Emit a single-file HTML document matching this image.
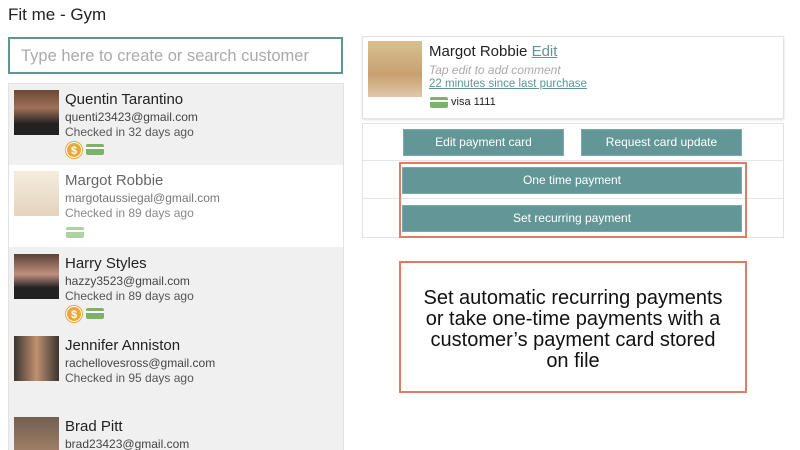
<!DOCTYPE html>
<html style="overflow:hidden;width:800px;height:450px"><head><style>
*{margin:0;padding:0;box-sizing:border-box}
body{width:800px;height:450px;overflow:hidden;background:#fff;font-family:"Liberation Sans",sans-serif;color:#222;position:relative}
.a{position:absolute}
.row{position:absolute;left:9px;width:334px;height:80px;overflow:hidden}
.ph{position:absolute;left:5px;top:6px;width:45px;height:45px}
.nm{position:absolute;left:56px;top:7px;font-size:15px}
.em{position:absolute;left:56px;top:26px;font-size:12px;color:#444}
.ck{position:absolute;left:56px;top:41px;font-size:12px;color:#555}
.card{display:inline-block;width:18px;height:11px;background:#7cb36a;border-radius:2px;position:relative}
.card:after{content:"";position:absolute;left:0;right:0;top:3px;height:2px;background:#fff}
.coin{display:inline-block;width:16px;height:16px;border-radius:50%;background:#e8a93a;color:#fff;font-size:11px;text-align:center;line-height:16px;font-weight:bold;vertical-align:middle;border:1px solid #fff;box-shadow:0 0 0 1px #e8a93a}
.btn{position:absolute;background:#639797;color:#fff;font-size:12px;text-align:center;line-height:25px;border:1px solid #7aa9a9}
.ln{position:absolute;background:#e6e6e6;height:1px}
</style></head><body>
<div class="a" style="left:8px;top:5px;font-size:17px;color:#222">Fit me - Gym</div>
<div class="a" style="left:8px;top:37px;width:335px;height:37px;border:2px solid #5e9595;font-size:16.5px;color:#aaa;padding:8px 0 0 11px">Type here to create or search customer</div>
<div class="a" style="left:8px;top:83px;width:336px;height:367px;background:#f0f0f0;border:1px solid #e2e2e2"></div>

<div class="row" style="top:84px;background:#f0f0f0">
<div class="ph" style="background:linear-gradient(#6a4a35 0,#a0705a 40%,#222 75%)"></div>
<div class="nm">Quentin Tarantino</div><div class="em">quenti23423@gmail.com</div><div class="ck">Checked in 32 days ago</div>
<div class="a" style="left:57px;top:57px"><span class="coin">$</span> <span class="card" style="vertical-align:middle"></span></div></div>

<div class="row" style="top:165px;background:#fff;height:82px">
<div class="ph" style="background:linear-gradient(#efe5d0,#d9c0a0);opacity:.7"></div>
<div class="nm" style="color:#666">Margot Robbie</div><div class="em" style="color:#777">margotaussiegal@gmail.com</div><div class="ck" style="color:#888">Checked in 89 days ago</div>
<div class="a" style="left:57px;top:60px"><span class="card" style="opacity:.6"></span></div></div>

<div class="row" style="top:248px;background:#f0f0f0">
<div class="ph" style="background:linear-gradient(#5a4035,#c09080 45%,#222 75%)"></div>
<div class="nm">Harry Styles</div><div class="em">hazzy3523@gmail.com</div><div class="ck">Checked in 89 days ago</div>
<div class="a" style="left:57px;top:57px"><span class="coin">$</span> <span class="card" style="vertical-align:middle"></span></div></div>

<div class="row" style="top:330px;background:#f0f0f0">
<div class="ph" style="background:linear-gradient(90deg,#3a3530,#c09070 50%,#3a3530)"></div>
<div class="nm">Jennifer Anniston</div><div class="em">rachellovesross@gmail.com</div><div class="ck">Checked in 95 days ago</div></div>

<div class="row" style="top:411px;background:#f0f0f0;height:39px">
<div class="ph" style="background:linear-gradient(#706050,#b08870)"></div>
<div class="nm">Brad Pitt</div><div class="em">brad23423@gmail.com</div></div>

<div class="a" style="left:362px;top:36px;width:422px;height:83px;border:1px solid #e2e2e2;box-shadow:0 1px 2px #ddd"></div>
<div class="a" style="left:368px;top:41px;width:54px;height:56px;background:linear-gradient(#d8c090,#c8a070 60%,#e0c8a8)"></div>
<div class="a" style="left:429px;top:43px;font-size:15px">Margot Robbie <span style="color:#5e9595;text-decoration:underline">Edit</span></div>
<div class="a" style="left:429px;top:63px;font-size:12px;color:#aaa;font-style:italic">Tap edit to add comment</div>
<div class="a" style="left:429px;top:78px;font-size:11.5px;color:#5e9595;text-decoration:underline">22 minutes since last purchase</div>
<div class="a" style="left:430px;top:96px;font-size:11px"><span class="card" style="vertical-align:middle"></span> visa 1111</div>

<div class="a" style="left:362px;top:123px;width:422px;height:115px;border:1px solid #e2e2e2"></div>
<div class="ln" style="left:363px;top:160px;width:420px"></div>
<div class="ln" style="left:363px;top:198px;width:420px"></div>
<div class="btn" style="left:403px;top:129px;width:161px;height:27px">Edit payment card</div>
<div class="btn" style="left:581px;top:129px;width:161px;height:27px">Request card update</div>
<div class="btn" style="left:402px;top:167px;width:340px;height:27px">One time payment</div>
<div class="btn" style="left:402px;top:205px;width:340px;height:27px">Set recurring payment</div>
<div class="a" style="left:399px;top:162px;width:348px;height:76px;border:2px solid #de7c64"></div>

<div class="a" style="left:399px;top:261px;width:348px;height:132px;border:2px solid #de7c64;font-size:20px;line-height:21px;text-align:center;padding-top:25px;color:#111">Set automatic recurring payments<br>or take one-time payments with a<br>customer’s payment card stored<br>on file</div>
</body></html>
